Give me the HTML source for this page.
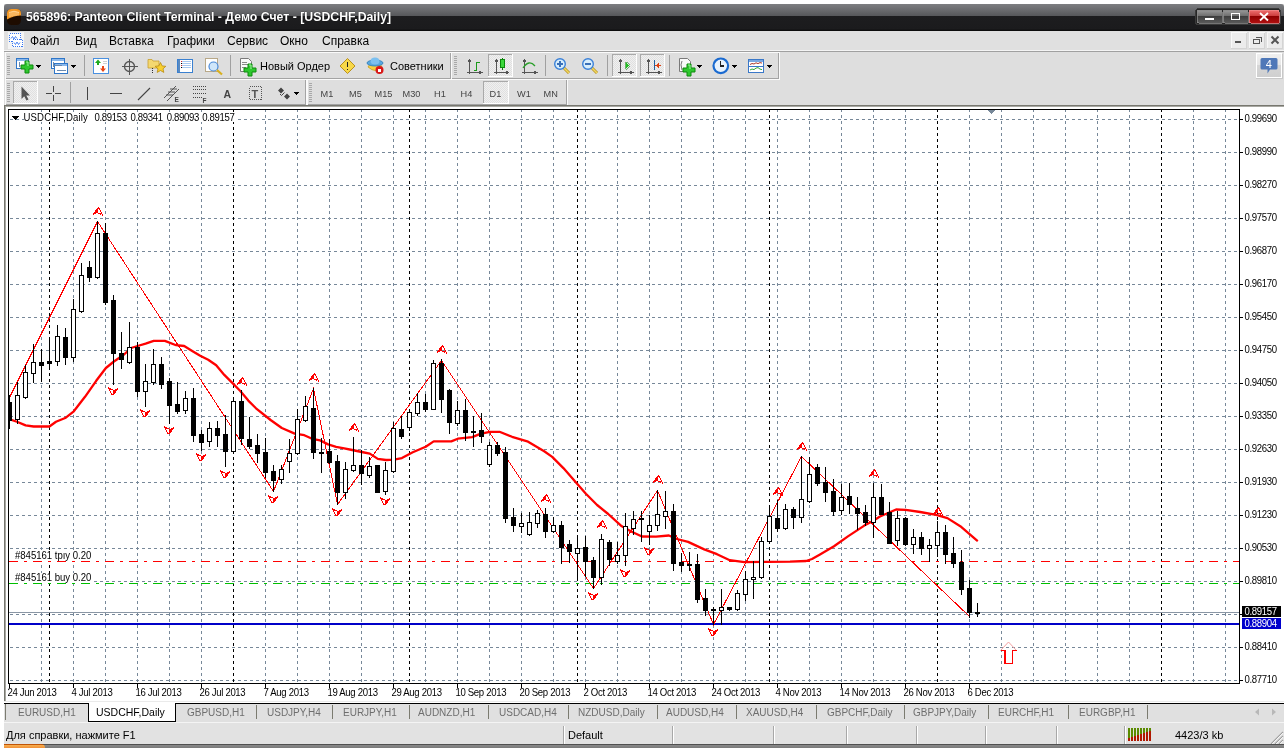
<!DOCTYPE html>
<html><head><meta charset="utf-8">
<style>
*{margin:0;padding:0;box-sizing:border-box}
html,body{width:1288px;height:748px;overflow:hidden;background:#fff;font-family:"Liberation Sans",sans-serif;position:relative}
.a{position:absolute}
#frame{left:4px;top:4px;width:1280px;height:740px;background:#e0e0e0}
#title{left:4px;top:4px;width:1280px;height:27px;border-radius:3px 3px 0 0;background:linear-gradient(#7d7e81 0px,#6a6b6e 6px,#56575a 12px,#1d1d1f 12px,#1b1b1d 25px,#070707 27px)}
#title .t{left:22px;top:6px;color:#fff;font-weight:bold;font-size:12.3px;white-space:nowrap;text-shadow:0 0 1px #000}
#menu{left:4px;top:31px;width:1280px;height:20px;background:#e0e0e0}
#menu span{position:absolute;top:3px;font-size:12px;color:#000}
#tb{left:4px;top:51px;width:1280px;height:55px;background:#dedede}
#chartbg{left:4px;top:105px;width:1280px;height:596px;background:#fff;border-left:1px solid #77776f;border-top:1px solid #77776f;box-shadow:inset 1px 1px 0 #a8a8a2}
#tabs{left:4px;top:701px;width:1280px;height:21px;background:linear-gradient(#eaeaea 0,#eaeaea 1px,#fff 1px,#fff 2px,#e0e0e0 2px)}
#tabs span{position:absolute;top:6px;font-size:10px;color:#6f6f66;white-space:nowrap}
#tabs i{position:absolute;top:4px;width:1px;height:14px;background:#7b7b70}
#status{left:4px;top:722px;width:1280px;height:22px;background:#e2e2e2;border-top:1px solid #f4f4f4}
#status span{position:absolute;top:6px;font-size:11px;color:#000;white-space:nowrap}
#status i{position:absolute;top:3px;width:1px;height:18px;background:#a8a8a8;border-right:1px solid #fff;box-sizing:content-box}
#menu span,#tabs span,#status span,#title .t,svg text{filter:grayscale(1)}
#task{left:4px;top:744px;width:1280px;height:4px;background:linear-gradient(#505050 0,#505050 1px,#8a8a8a 1px,#7a7a7a 4px)}
#taskst{left:4px;top:744px;width:41px;height:4px;background:linear-gradient(#c05408 0,#c05408 1px,#f8b050 1px,#f09038 4px);border-radius:0 4px 0 0}
</style></head><body>
<div id="frame" class="a"></div>
<div id="title" class="a"><div class="a t">565896: Panteon Client Terminal - Демо Счет - [USDCHF,Daily]</div></div>
<div id="menu" class="a">
<span style="left:26px">Файл</span><span style="left:71px">Вид</span><span style="left:105px">Вставка</span><span style="left:163px">Графики</span><span style="left:223px">Сервис</span><span style="left:276px">Окно</span><span style="left:318px">Справка</span>
</div>
<div id="tb" class="a"></div>
<svg width="1288" height="110" style="position:absolute;left:0;top:0" shape-rendering="crispEdges"><defs><pattern id="chk" width="2" height="2" patternUnits="userSpaceOnUse"><rect width="2" height="2" fill="#f0f0f0"/><rect width="1" height="1" fill="#e0e0e0"/><rect x="1" y="1" width="1" height="1" fill="#e0e0e0"/></pattern><linearGradient id="gmin" x1="0" y1="0" x2="0" y2="1"><stop offset="0" stop-color="#9a9a9a"/><stop offset="0.5" stop-color="#6a6a6a"/><stop offset="0.5" stop-color="#3e3e3e"/><stop offset="1" stop-color="#5a5a5a"/></linearGradient><linearGradient id="gcls" x1="0" y1="0" x2="0" y2="1"><stop offset="0" stop-color="#f07070"/><stop offset="0.5" stop-color="#c83838"/><stop offset="0.5" stop-color="#8e0000"/><stop offset="1" stop-color="#b01010"/></linearGradient><linearGradient id="gico" x1="0" y1="0" x2="0" y2="1"><stop offset="0" stop-color="#ffb84a"/><stop offset="0.55" stop-color="#f08a10"/><stop offset="0.56" stop-color="#2a1200"/><stop offset="1" stop-color="#1a0a00"/></linearGradient><linearGradient id="gnot" x1="0" y1="0" x2="0" y2="1"><stop offset="0" stop-color="#f0f0f0"/><stop offset="0.5" stop-color="#e6e6e6"/><stop offset="0.5" stop-color="#d6d6d6"/><stop offset="1" stop-color="#cfcfcf"/></linearGradient></defs><rect x="7" y="9" width="14" height="16" rx="4.5" fill="#1e0c00" shape-rendering="geometricPrecision"/><path d="M7,18 V13.5 Q7,9 11.5,9 H16.5 Q21,9 21,13.5 V15.5 Q14,15.5 7,19.5z" fill="#f59a28" shape-rendering="geometricPrecision"/><path d="M9,12.5 Q14,10 19,12.5 M10,12.5V17 M12,11.8V16.5 M14,11.5V16 M16,11.8V15.8 M18,12.5V15.5" stroke="#ffd8a0" stroke-width="0.9" fill="none" shape-rendering="geometricPrecision"/><rect x="1195.5" y="8.5" width="85" height="16" rx="3" fill="#262626" stroke="#3a3a3a"/><rect x="1197" y="10" width="25" height="13" rx="1.5" fill="url(#gmin)" stroke="#8a8a8a" stroke-width="0.8"/><rect x="1223" y="10" width="25" height="13" rx="1.5" fill="url(#gmin)" stroke="#8a8a8a" stroke-width="0.8"/><rect x="1249" y="10" width="30" height="13" rx="1.5" fill="url(#gcls)" stroke="#e88" stroke-width="0.8"/><rect x="1205" y="18" width="9" height="2.2" fill="#fff"/><rect x="1231.5" y="13.5" width="8" height="6" fill="none" stroke="#fff" stroke-width="1.4"/><path d="M1260,13L1268,20.5M1268,13L1260,20.5" stroke="#fff" stroke-width="1.8" shape-rendering="geometricPrecision"/><rect x="8" y="32" width="16" height="17" fill="#f4f4f4"/><rect x="9.5" y="33.5" width="11" height="8" fill="#fff" stroke="#3a78f0" stroke-dasharray="1 1"/><path d="M11,38.5l1.5,-2l1.5,2.5l1.5,-2.5l1.5,2" stroke="#3a78f0" fill="none" stroke-width="0.9" shape-rendering="geometricPrecision"/><rect x="12.5" y="39.5" width="10" height="7" fill="#fff" stroke="#3a78f0" stroke-dasharray="1 1"/><path d="M14,42.5l1.5,2l1.5,-2.5l1.5,2.5l1.5,-2" stroke="#3a78f0" fill="none" stroke-width="0.9" shape-rendering="geometricPrecision"/><rect x="1231.5" y="32.5" width="15" height="15.5" fill="#ececec" stroke="#f8f8f8"/><path d="M1246.5,33V48.5H1231" stroke="#d4d4d4" fill="none"/><rect x="1249.5" y="32.5" width="15" height="15.5" fill="#ececec" stroke="#f8f8f8"/><path d="M1264.5,33V48.5H1249" stroke="#d4d4d4" fill="none"/><rect x="1267.5" y="32.5" width="15" height="15.5" fill="#ececec" stroke="#f8f8f8"/><path d="M1282.5,33V48.5H1267" stroke="#d4d4d4" fill="none"/><rect x="1235" y="41" width="6" height="2" fill="#555"/><path d="M1253.5,39.5h6v4h-6z M1255.5,37.5h6v4" stroke="#555" stroke-width="1.2" fill="none"/><path d="M1271.5,36.5L1278.5,43.5M1278.5,36.5L1271.5,43.5" stroke="#555" stroke-width="2" shape-rendering="geometricPrecision"/><path d="M4,51.5H1284" stroke="#a0a0a0"/><path d="M4,50.5H1284" stroke="#f4f4f4"/><path d="M5.5,79V52.5H451" stroke="#fafafa" fill="none"/><path d="M450.5,53V78.5H6" stroke="#a4a4a4" fill="none"/><path d="M451.5,52V79.5H5" stroke="#fafafa" fill="none"/><path d="M451.5,79V52.5H779" stroke="#fafafa" fill="none"/><path d="M778.5,53V78.5H452" stroke="#a4a4a4" fill="none"/><path d="M779.5,52V79.5H451" stroke="#fafafa" fill="none"/><path d="M5.5,105V79.5H306" stroke="#fafafa" fill="none"/><path d="M305.5,80V104.5H6" stroke="#a4a4a4" fill="none"/><path d="M306.5,79V105.5H5" stroke="#fafafa" fill="none"/><path d="M307.5,105V79.5H567" stroke="#fafafa" fill="none"/><path d="M566.5,80V104.5H308" stroke="#a4a4a4" fill="none"/><path d="M567.5,79V105.5H307" stroke="#fafafa" fill="none"/><path d="M7,56.5h3M7,58.5h3M7,60.5h3M7,62.5h3M7,64.5h3M7,66.5h3M7,68.5h3M7,70.5h3M7,72.5h3M7,74.5h3" stroke="#a8a8a8" fill="none"/><path d="M7,83.5h3M7,85.5h3M7,87.5h3M7,89.5h3M7,91.5h3M7,93.5h3M7,95.5h3M7,97.5h3M7,99.5h3M7,101.5h3" stroke="#a8a8a8" fill="none"/><path d="M454,56.5h3M454,58.5h3M454,60.5h3M454,62.5h3M454,64.5h3M454,66.5h3M454,68.5h3M454,70.5h3M454,72.5h3M454,74.5h3" stroke="#a8a8a8" fill="none"/><path d="M309,83.5h3M309,85.5h3M309,87.5h3M309,89.5h3M309,91.5h3M309,93.5h3M309,95.5h3M309,97.5h3M309,99.5h3M309,101.5h3" stroke="#a8a8a8" fill="none"/><path d="M84.5,55V76" stroke="#a0a0a0"/><path d="M230.5,55V76" stroke="#a0a0a0"/><path d="M545.5,55V76" stroke="#a0a0a0"/><path d="M607.5,55V76" stroke="#a0a0a0"/><path d="M669.5,55V76" stroke="#a0a0a0"/><path d="M70.5,82V103" stroke="#a0a0a0"/><rect x="16.5" y="58.5" width="12" height="10" fill="#fff" stroke="#2f76c8"/><rect x="17" y="59" width="11" height="2" fill="#8ab8ec"/><path d="M19.5,62V67" stroke="#6a8ab0"/><path d="M25,61h4v4h4v4h-4v4h-4v-4h-4v-4h4z" fill="#2ec72e" stroke="#0c8a0c" stroke-width="1" shape-rendering="geometricPrecision"/><path d="M26,62h2v4" stroke="#9ef59e" stroke-width="1" fill="none" shape-rendering="geometricPrecision"/><path d="M36,65h5l-2.5,3z" fill="#000"/><rect x="51.5" y="58.5" width="13" height="10" fill="#fff" stroke="#2f76c8"/><rect x="52" y="59" width="12" height="2" fill="#8ab8ec"/><rect x="54.5" y="63.5" width="13" height="10" fill="#fff" stroke="#2f76c8"/><rect x="55" y="64" width="12" height="2" fill="#8ab8ec"/><path d="M53.5,61.5V66.5 M53,65.5H62 M57,70.5H66" stroke="#6a8ab0"/><path d="M71,65h5l-2.5,3z" fill="#000"/><rect x="93.5" y="58.5" width="15" height="15" rx="1" fill="#fff" stroke="#4a90e0" stroke-width="1.2"/><path d="M97,65h2v-2h2l-3,-3.5l-3,3.5h2z" fill="#1faa1f" shape-rendering="geometricPrecision"/><path d="M102,66h2v2.5h2l-3,3.5l-3,-3.5h2z" fill="#e84818" shape-rendering="geometricPrecision"/><path d="M103,61h4 M103,63h4" stroke="#d0d0d0"/><circle cx="129.5" cy="66.5" r="5" fill="none" stroke="#555" stroke-width="1.3" shape-rendering="geometricPrecision"/><path d="M129.5,58.5V74.5 M121.5,66.5H137.5" stroke="#555" stroke-width="1.2"/><path d="M148,59.5h4l1,1.5h6v7h-11z" fill="#f4d870" stroke="#c8a030" stroke-width="0.8" shape-rendering="geometricPrecision"/><path d="M160.5,62.5l1.6,3.4l3.7,0.4l-2.8,2.5l0.8,3.6l-3.3,-1.9l-3.3,1.9l0.8,-3.6l-2.8,-2.5l3.7,-0.4z" fill="#f8d030" stroke="#b88a10" stroke-width="0.8" shape-rendering="geometricPrecision"/><path d="M152.5,68V74" stroke="#333" stroke-dasharray="1 1"/><rect x="177.5" y="59.5" width="15" height="13" rx="1" fill="#fff" stroke="#3a80d0" stroke-width="1.2"/><rect x="178" y="60" width="2" height="12" fill="#5a8ac0"/><path d="M182,61.5h9 M182,63.5h9 M182,65.5h9 M182,67.5h9" stroke="#a8c8f0"/><path d="M181,61.5h1 M181,65.5h1" stroke="#e02020"/><path d="M181,63.5h1 M181,67.5h1" stroke="#000"/><rect x="205.5" y="58.5" width="12" height="13" fill="#fff" stroke="#b8a888"/><circle cx="213.5" cy="66.5" r="4.5" fill="#cfe6fa" stroke="#4a8ad8" stroke-width="1.2" shape-rendering="geometricPrecision"/><path d="M217,70L222,74.5" stroke="#d8b020" stroke-width="2.2" shape-rendering="geometricPrecision"/><path d="M240.5,58.5h8l3,3v10h-11z" fill="#fafafa" stroke="#7a7a7a" shape-rendering="geometricPrecision"/><path d="M242,62h5 M242,64.5h6 M242,67h4" stroke="#8a8a8a"/><path d="M248,64h4v4h4v4h-4v4h-4v-4h-4v-4h4z" fill="#2ec72e" stroke="#0c8a0c" stroke-width="1" shape-rendering="geometricPrecision"/><path d="M249,65h2v4" stroke="#9ef59e" stroke-width="1" fill="none" shape-rendering="geometricPrecision"/><text x="260" y="70" font-family='"Liberation Sans", sans-serif' font-size="11" fill="#000">Новый Ордер</text><path d="M347.5,58.5l7.5,7.5l-7.5,7.5l-7.5,-7.5z" fill="#f8d848" stroke="#b89020" stroke-width="1" shape-rendering="geometricPrecision"/><path d="M347.5,61.5V67" stroke="#222" stroke-width="1.6"/><rect x="346.7" y="68.5" width="1.6" height="1.6" fill="#222"/><path d="M368,67 q8,7 14,0 l-2,-3 h-10z" fill="#f8d040" stroke="#c8a020" stroke-width="0.8" shape-rendering="geometricPrecision"/><ellipse cx="375" cy="63" rx="8" ry="3" fill="#58a8e0" stroke="#2a78b8" stroke-width="0.8" shape-rendering="geometricPrecision"/><ellipse cx="375" cy="61" rx="4.5" ry="3.5" fill="#7cc0f0" shape-rendering="geometricPrecision"/><circle cx="379.5" cy="70" r="4" fill="#d81818" shape-rendering="geometricPrecision"/><rect x="378" y="68.5" width="3" height="3" fill="#fff"/><text x="390" y="70" font-family='"Liberation Sans", sans-serif' font-size="11" fill="#000">Советники</text><rect x="488" y="54" width="25" height="23" fill="url(#chk)"/><path d="M488.5,77V54.5H513" stroke="#a9a9a9" fill="none"/><path d="M488,76.5H512.5V54" stroke="#fff" fill="none"/><path d="M469.5,59V74 M467,72.5H482" stroke="#555" stroke-width="1.2" fill="none"/><path d="M467.5,62L469.5,58.5L471.5,62z M479,70.5L482.5,72.5L479,74.5z" fill="#555"/><path d="M474,70.5h2.5V62.5h3" stroke="#1a9a1a" stroke-width="1.4" fill="none"/><path d="M496.5,59V74 M494,72.5H509" stroke="#555" stroke-width="1.2" fill="none"/><path d="M494.5,62L496.5,58.5L498.5,62z M506,70.5L509.5,72.5L506,74.5z" fill="#555"/><path d="M502.5,57.5V70" stroke="#0c7a0c"/><rect x="500.5" y="59.5" width="4" height="8" fill="#3cd83c" stroke="#0c8a0c"/><path d="M524.5,59V74 M522,72.5H537" stroke="#555" stroke-width="1.2" fill="none"/><path d="M522.5,62L524.5,58.5L526.5,62z M534,70.5L537.5,72.5L534,74.5z" fill="#555"/><path d="M523,68 Q529,59 535,66" stroke="#2aa02a" stroke-width="1.3" fill="none" shape-rendering="geometricPrecision"/><path d="M563.5,67.5L569,73" stroke="#b89020" stroke-width="3" shape-rendering="geometricPrecision"/><path d="M563.5,67.5L569,73" stroke="#f0d860" stroke-width="1.6" shape-rendering="geometricPrecision"/><circle cx="560" cy="64" r="5.3" fill="#d8eefc" stroke="#3a80d8" stroke-width="1.4" shape-rendering="geometricPrecision"/><path d="M557,64H563" stroke="#3a70b8" stroke-width="1.6"/><path d="M560,61V67" stroke="#3a70b8" stroke-width="1.6"/><path d="M591.5,67.5L597,73" stroke="#b89020" stroke-width="3" shape-rendering="geometricPrecision"/><path d="M591.5,67.5L597,73" stroke="#f0d860" stroke-width="1.6" shape-rendering="geometricPrecision"/><circle cx="588" cy="64" r="5.3" fill="#d8eefc" stroke="#3a80d8" stroke-width="1.4" shape-rendering="geometricPrecision"/><path d="M585,64H591" stroke="#3a70b8" stroke-width="1.6"/><rect x="612" y="54" width="25" height="23" fill="url(#chk)"/><path d="M612.5,77V54.5H637" stroke="#a9a9a9" fill="none"/><path d="M612,76.5H636.5V54" stroke="#fff" fill="none"/><path d="M620.5,59V74 M618,72.5H633" stroke="#555" stroke-width="1.2" fill="none"/><path d="M618.5,62L620.5,58.5L622.5,62z M630,70.5L633.5,72.5L630,74.5z" fill="#555"/><path d="M625.5,62v7l4,-3.5z" fill="#20c020" stroke="#109010" stroke-width="0.6"/><rect x="640" y="54" width="25" height="23" fill="url(#chk)"/><path d="M640.5,77V54.5H665" stroke="#a9a9a9" fill="none"/><path d="M640,76.5H664.5V54" stroke="#fff" fill="none"/><path d="M648.5,59V74 M646,72.5H661" stroke="#555" stroke-width="1.2" fill="none"/><path d="M646.5,62L648.5,58.5L650.5,62z M658,70.5L661.5,72.5L658,74.5z" fill="#555"/><path d="M654.5,60V70" stroke="#2060a0" stroke-width="1.3"/><path d="M655.5,65.5l3,-2.5v1.8h2v1.4h-2v1.8z" fill="#e04010"/><path d="M679.5,58.5h8l3,3v10h-11z" fill="#fafafa" stroke="#7a7a7a" shape-rendering="geometricPrecision"/><path d="M682,61 q-2,3 0,9" stroke="#555" fill="none" stroke-width="0.8" shape-rendering="geometricPrecision"/><path d="M687,64h4v4h4v4h-4v4h-4v-4h-4v-4h4z" fill="#2ec72e" stroke="#0c8a0c" stroke-width="1" shape-rendering="geometricPrecision"/><path d="M688,65h2v4" stroke="#9ef59e" stroke-width="1" fill="none" shape-rendering="geometricPrecision"/><path d="M697,65h5l-2.5,3z" fill="#000"/><circle cx="720.8" cy="65.8" r="7.3" fill="#e8f2fc" stroke="#1a6ad0" stroke-width="2.2" shape-rendering="geometricPrecision"/><path d="M720.5,61V66H724" stroke="#222" stroke-width="1.1" fill="none"/><path d="M732,65h5l-2.5,3z" fill="#000"/><rect x="748.5" y="59.5" width="15" height="13" fill="#fff" stroke="#3a78c8" stroke-width="1.2"/><rect x="749" y="60" width="14" height="1.5" fill="#7aa8e0"/><path d="M749,66.5h14" stroke="#3a78c8"/><path d="M750,64.5l2,-1l2,0.5l2,-1.2l2,0.8l2,-1l2,0.5" stroke="#a02010" fill="none" stroke-width="0.9" shape-rendering="geometricPrecision"/><path d="M750,70l2,-1l2,0.6l2,-1.5l2,-0.5l2,1.5l2,0.5" stroke="#20a020" fill="none" stroke-width="0.9" shape-rendering="geometricPrecision"/><path d="M767,65h5l-2.5,3z" fill="#000"/><rect x="1256.5" y="53.5" width="25" height="24" fill="url(#gnot)" stroke="#fff"/><path d="M1282,54V78H1256" stroke="#c8c8c8" fill="none"/><path d="M1262,58h14a1.5,1.5 0 0 1 1.5,1.5v8.5a1.5,1.5 0 0 1 -1.5,1.5h-6l-2.5,4v-4h-5.5a1.5,1.5 0 0 1 -1.5,-1.5v-8.5a1.5,1.5 0 0 1 1.5,-1.5z" fill="#4f78b8" shape-rendering="geometricPrecision"/><text x="1265.8" y="67.5" font-family='"Liberation Sans", sans-serif' font-size="11" fill="#fff">4</text><rect x="13" y="81" width="25" height="23" fill="url(#chk)"/><path d="M13.5,104V81.5H38" stroke="#a9a9a9" fill="none"/><path d="M13,103.5H37.5V81" stroke="#fff" fill="none"/><path d="M21.5,86.5V99l2.7,-2.8l2.3,4.3l2,-1l-2.2,-4h3.7z" fill="#555" shape-rendering="geometricPrecision"/><path d="M53.5,86V92 M53.5,95V101 M46,93.5H52 M55,93.5H61" stroke="#444" stroke-width="1.1"/><path d="M87.5,87V100" stroke="#444" stroke-width="1.1"/><path d="M110,93.5H122" stroke="#444" stroke-width="1.1"/><path d="M138,100L150,88" stroke="#444" stroke-width="1.1" shape-rendering="geometricPrecision"/><path d="M164,98L176,86 M167,101L179,89 M166,95h7 M168,92h7 M170,89h7" stroke="#555" stroke-width="1" fill="none" shape-rendering="geometricPrecision"/><text x="174.5" y="102" font-family='"Liberation Sans", sans-serif' font-size="6.5" font-weight="bold" fill="#444">E</text><path d="M193,86.5h14 M193,89.5h14 M193,93.5h14 M193,97.5h10" stroke="#444" stroke-dasharray="1 1"/><text x="202.5" y="102.5" font-family='"Liberation Sans", sans-serif' font-size="6.5" font-weight="bold" fill="#444">F</text><text x="223.5" y="97.5" font-family='"Liberation Sans", sans-serif' font-size="10.5" font-weight="bold" fill="#444">A</text><rect x="249.5" y="86.5" width="12" height="13" fill="none" stroke="#555" stroke-dasharray="1 1"/><text x="251.5" y="98" font-family='"Liberation Sans", sans-serif' font-size="11" font-weight="bold" fill="#555">T</text><path d="M278,90.5l3,-3l3,3l-3,3z M284,96.5l3,-3l3,3l-3,3z" fill="#444" shape-rendering="geometricPrecision"/><path d="M280,94l1.5,1.5l3,-3" stroke="#444" fill="none" stroke-width="1" shape-rendering="geometricPrecision"/><path d="M294,92h5l-2.5,3z" fill="#000"/><rect x="483" y="81" width="26" height="23" fill="url(#chk)"/><path d="M483.5,104V81.5H509" stroke="#a9a9a9" fill="none"/><path d="M483,103.5H508.5V81" stroke="#fff" fill="none"/><text x="320.5" y="96.7" font-family='"Liberation Sans", sans-serif' font-size="9.2" fill="#444">M1</text><text x="349" y="96.7" font-family='"Liberation Sans", sans-serif' font-size="9.2" fill="#444">M5</text><text x="374.5" y="96.7" font-family='"Liberation Sans", sans-serif' font-size="9.2" fill="#444">M15</text><text x="402.5" y="96.7" font-family='"Liberation Sans", sans-serif' font-size="9.2" fill="#444">M30</text><text x="434" y="96.7" font-family='"Liberation Sans", sans-serif' font-size="9.2" fill="#444">H1</text><text x="460.5" y="96.7" font-family='"Liberation Sans", sans-serif' font-size="9.2" fill="#444">H4</text><text x="489.5" y="96.7" font-family='"Liberation Sans", sans-serif' font-size="9.2" fill="#444">D1</text><text x="517" y="96.7" font-family='"Liberation Sans", sans-serif' font-size="9.2" fill="#444">W1</text><text x="543.5" y="96.7" font-family='"Liberation Sans", sans-serif' font-size="9.2" fill="#444">MN</text></svg>
<div id="chartbg" class="a"></div>
<svg width="1288" height="748" viewBox="0 0 1288 748" shape-rendering="crispEdges" style="position:absolute;left:0;top:0"><path d="M9,119.5H1239 M9,152.5H1239 M9,185.5H1239 M9,218.5H1239 M9,251.5H1239 M9,284.5H1239 M9,317.5H1239 M9,350.5H1239 M9,383.5H1239 M9,416.5H1239 M9,449.5H1239 M9,482.5H1239 M9,515.5H1239 M9,548.5H1239 M9,581.5H1239 M9,614.5H1239 M9,647.5H1239 M9,680.5H1239" stroke="#778899" stroke-width="1" stroke-dasharray="3 3" stroke-dashoffset="-1" fill="none"/><path d="M41.5,109V683 M73.5,109V683 M105.5,109V683 M137.5,109V683 M169.5,109V683 M201.5,109V683 M265.5,109V683 M297.5,109V683 M329.5,109V683 M361.5,109V683 M393.5,109V683 M425.5,109V683 M457.5,109V683 M489.5,109V683 M521.5,109V683 M553.5,109V683 M585.5,109V683 M617.5,109V683 M649.5,109V683 M681.5,109V683 M713.5,109V683 M745.5,109V683 M777.5,109V683 M809.5,109V683 M841.5,109V683 M873.5,109V683 M905.5,109V683 M969.5,109V683 M1001.5,109V683 M1033.5,109V683 M1065.5,109V683 M1097.5,109V683 M1129.5,109V683 M1193.5,109V683 M1225.5,109V683" stroke="#778899" stroke-width="1" stroke-dasharray="3 3" fill="none"/><path d="M49.5,109V683 M233.5,109V683 M409.5,109V683 M577.5,109V683 M769.5,109V683 M937.5,109V683 M1161.5,109V683" stroke="#000" stroke-width="1" stroke-dasharray="3 3" fill="none"/><path d="M9,561.5H1239" stroke="#ff0000" stroke-width="1" stroke-dasharray="9 6 3 6" fill="none"/><path d="M9,583.5H1239" stroke="#00c000" stroke-width="1" stroke-dasharray="9 6 3 6" fill="none"/><path d="M9,612.5H1239" stroke="#8a96a4" stroke-width="1" fill="none"/><path d="M9,624H1239" stroke="#0000c8" stroke-width="2" fill="none"/><defs><clipPath id="cc"><rect x="9" y="110" width="1230" height="573"/></clipPath></defs><g clip-path="url(#cc)"><polyline points="9.0,419.0 17.6,422.0 25.6,425.4 33.7,426.5 49.4,426.5 56.0,421.7 65.8,417.7 73.8,411.3 85.0,396.8 96.2,380.8 105.9,368.0 113.9,361.5 123.5,355.0 131.0,348.0 137.6,346.0 145.6,343.6 153.7,340.9 164.9,340.9 176.1,345.2 184.2,346.0 192.2,350.9 200.2,355.7 208.2,359.7 216.2,365.3 224.3,374.9 232.3,382.9 240.3,391.0 248.3,400.6 256.0,408.3 270.6,420.0 281.8,428.0 294.7,433.6 304.3,435.2 312.1,438.8 320.1,440.4 328.1,444.4 336.1,446.8 344.2,448.4 352.2,450.0 361.8,452.0 369.8,453.6 377.8,458.9 385.9,460.0 393.9,459.7 401.9,458.1 412.8,452.3 425.7,446.7 433.7,441.4 451.3,441.4 457.8,438.7 472.2,437.1 480.2,433.9 489.8,431.8 499.5,431.8 512.1,436.8 528.1,441.7 544.2,451.3 552.2,456.9 563.4,468.1 574.7,481.0 585.9,493.8 597.1,505.0 608.2,514.0 621.0,525.7 630.7,531.3 641.9,536.5 656.0,536.6 668.9,535.5 676.9,539.0 688.1,541.9 704.2,549.4 717.0,554.2 729.8,560.2 744.3,562.2 768.0,561.8 790.0,561.6 806.0,561.0 812.0,559.0 820.0,554.5 834.0,546.3 848.3,536.1 864.3,525.6 872.0,521.5 880.0,516.5 896.1,509.5 905.7,509.8 920.2,512.0 936.2,514.9 947.4,518.1 960.3,526.2 977.1,540.6" stroke="#ff0000" stroke-width="2.3" fill="none" stroke-linejoin="round" stroke-linecap="round" shape-rendering="geometricPrecision"/><polyline points="9.5,397.5 97.5,221.5 273.5,491.5 313.5,388.5 337.5,504.5 441.5,360.5 593.5,588.5 657.5,490.5 713.5,624.5 801.5,456.5 969.5,616.5" stroke="#ff0000" stroke-width="1" fill="none"/><path d="M9.5,395V429 M17.5,382V424 M25.5,365V399 M33.5,344V383 M41.5,349V382 M49.5,337V370 M57.5,325V366 M65.5,328V365 M73.5,299V362 M81.5,263V313 M89.5,261V282 M97.5,221V279 M105.5,223V305 M113.5,295V385 M121.5,332V369 M129.5,322V364 M137.5,342V397 M145.5,364V407 M153.5,349V385 M161.5,357V389 M169.5,378V424 M177.5,382V414 M185.5,391V414 M193.5,388V442 M201.5,430V451 M209.5,422V447 M217.5,421V447 M225.5,415V467 M233.5,397V453 M241.5,390V445 M249.5,417V449 M257.5,434V463 M265.5,438V478 M273.5,465V492 M281.5,465V484 M289.5,439V473 M297.5,409V455 M305.5,396V422 M313.5,388V459 M321.5,438V473 M329.5,439V464 M337.5,455V505 M345.5,462V499 M353.5,437V472 M361.5,450V485 M369.5,457V478 M377.5,465V493 M385.5,462V495 M393.5,422V473 M401.5,416V439 M409.5,409V431 M417.5,393V416 M425.5,394V412 M433.5,360V410 M441.5,359V413 M449.5,389V434 M457.5,401V426 M465.5,399V441 M473.5,416V447 M481.5,413V443 M489.5,442V467 M497.5,442V456 M505.5,447V523 M513.5,508V532 M521.5,513V533 M529.5,512V536 M537.5,510V528 M545.5,508V538 M553.5,517V533 M561.5,521V564 M569.5,540V563 M577.5,535V581 M585.5,536V577 M593.5,557V589 M601.5,534V585 M609.5,540V566 M617.5,542V564 M625.5,513V566 M633.5,511V535 M641.5,511V542 M649.5,515V545 M657.5,490V531 M665.5,491V529 M673.5,504V571 M681.5,553V572 M689.5,552V571 M697.5,554V603 M705.5,589V616 M713.5,607V625 M721.5,589V625 M729.5,607V611 M737.5,590V611 M745.5,571V601 M753.5,561V599 M761.5,537V579 M769.5,505V544 M777.5,500V532 M785.5,504V530 M793.5,507V529 M801.5,456V523 M809.5,457V503 M817.5,464V486 M825.5,467V502 M833.5,479V516 M841.5,484V515 M849.5,483V514 M857.5,497V530 M865.5,505V526 M873.5,483V538 M881.5,484V515 M889.5,502V544 M897.5,511V546 M905.5,517V546 M913.5,529V554 M921.5,532V555 M929.5,539V562 M937.5,521V557 M945.5,525V564 M953.5,537V568 M961.5,550V595 M969.5,580V618 M977.5,603V617" stroke="#000" stroke-width="1" fill="none"/><path d="M7,402h5v19h-5z M39,362h5v4h-5z M47,361h5v3h-5z M63,337h5v21h-5z M87,267h5v11h-5z M103,233h5v70h-5z M111,300h5v54h-5z M119,353h5v7h-5z M135,347h5v45h-5z M159,364h5v21h-5z M167,381h5v25h-5z M175,404h5v8h-5z M191,398h5v38h-5z M199,434h5v9h-5z M215,428h5v8h-5z M223,434h5v18h-5z M239,401h5v38h-5z M247,439h5v8h-5z M255,445h5v9h-5z M263,452h5v21h-5z M271,471h5v10h-5z M311,408h5v45h-5z M319,452h5v2h-5z M327,451h5v12h-5z M335,461h5v32h-5z M359,465h5v9h-5z M375,465h5v28h-5z M399,429h5v8h-5z M423,402h5v8h-5z M439,363h5v37h-5z M447,390h5v33h-5z M463,410h5v23h-5z M471,431h5v2h-5z M479,430h5v7h-5z M495,445h5v9h-5z M503,452h5v67h-5z M511,517h5v9h-5z M543,514h5v18h-5z M559,525h5v23h-5z M567,544h5v8h-5z M583,547h5v15h-5z M591,560h5v18h-5z M607,542h5v18h-5z M639,518h5v2h-5z M671,511h5v53h-5z M679,562h5v4h-5z M687,564h5v2h-5z M695,564h5v36h-5z M703,598h5v13h-5z M711,609h5v2h-5z M727,607h5v3h-5z M775,518h5v11h-5z M791,509h5v9h-5z M815,467h5v17h-5z M823,482h5v11h-5z M831,491h5v21h-5z M847,496h5v9h-5z M855,508h5v6h-5z M863,512h5v11h-5z M879,497h5v18h-5z M887,512h5v32h-5z M903,518h5v27h-5z M919,537h5v12h-5z M943,532h5v23h-5z M951,553h5v11h-5z M959,562h5v28h-5z M967,588h5v25h-5z M975,612h5v2h-5z" fill="#000"/><path d="M15.5,395.5h4v24h-4z M23.5,372.5h4v25h-4z M31.5,362.5h4v11h-4z M55.5,336.5h4v25h-4z M71.5,309.5h4v48h-4z M79.5,275.5h4v36h-4z M95.5,233.5h4v44h-4z M127.5,347.5h4v15h-4z M143.5,381.5h4v10h-4z M151.5,364.5h4v18h-4z M183.5,398.5h4v12h-4z M207.5,428.5h4v13h-4z M231.5,401.5h4v50h-4z M279.5,469.5h4v10h-4z M287.5,453.5h4v8h-4z M295.5,419.5h4v34h-4z M303.5,406.5h4v14h-4z M343.5,469.5h4v23h-4z M351.5,465.5h4v5h-4z M367.5,466.5h4v9h-4z M383.5,470.5h4v21h-4z M391.5,428.5h4v43h-4z M407.5,412.5h4v15h-4z M415.5,402.5h4v11h-4z M431.5,363.5h4v46h-4z M455.5,410.5h4v13h-4z M487.5,445.5h4v19h-4z M519.5,523.5h4v3h-4z M527.5,522.5h4v12h-4z M535.5,513.5h4v10h-4z M551.5,525.5h4v6h-4z M575.5,548.5h4v5h-4z M599.5,539.5h4v38h-4z M615.5,555.5h4v6h-4z M623.5,526.5h4v29h-4z M631.5,519.5h4v9h-4z M647.5,525.5h4v6h-4z M655.5,514.5h4v11h-4z M663.5,511.5h4v5h-4z M719.5,607.5h4v3h-4z M735.5,593.5h4v16h-4z M743.5,579.5h4v15h-4z M751.5,577.5h4v2h-4z M759.5,541.5h4v36h-4z M767.5,516.5h4v25h-4z M783.5,509.5h4v19h-4z M799.5,499.5h4v18h-4z M807.5,474.5h4v27h-4z M839.5,497.5h4v13h-4z M871.5,497.5h4v25h-4z M895.5,518.5h4v22h-4z M911.5,537.5h4v7h-4z M927.5,545.5h4v3h-4z M935.5,532.5h4v13h-4z" fill="#fff" stroke="#000" stroke-width="1"/><path d="M98,207 L91.5,216 L98,212.5Z" fill="#f00"/><path d="M98.5,207.5 L103,216 M98.5,213 L101.5,214.5" fill="none" stroke="#f00" stroke-width="1"/><path d="M242,377 L235.5,386 L242,382.5Z" fill="#f00"/><path d="M242.5,377.5 L247,386 M242.5,383 L245.5,384.5" fill="none" stroke="#f00" stroke-width="1"/><path d="M314,373 L307.5,382 L314,378.5Z" fill="#f00"/><path d="M314.5,373.5 L319,382 M314.5,379 L317.5,380.5" fill="none" stroke="#f00" stroke-width="1"/><path d="M354,423 L347.5,432 L354,428.5Z" fill="#f00"/><path d="M354.5,423.5 L359,432 M354.5,429 L357.5,430.5" fill="none" stroke="#f00" stroke-width="1"/><path d="M442,345 L435.5,354 L442,350.5Z" fill="#f00"/><path d="M442.5,345.5 L447,354 M442.5,351 L445.5,352.5" fill="none" stroke="#f00" stroke-width="1"/><path d="M546,494 L539.5,503 L546,499.5Z" fill="#f00"/><path d="M546.5,494.5 L551,503 M546.5,500 L549.5,501.5" fill="none" stroke="#f00" stroke-width="1"/><path d="M602,520 L595.5,529 L602,525.5Z" fill="#f00"/><path d="M602.5,520.5 L607,529 M602.5,526 L605.5,527.5" fill="none" stroke="#f00" stroke-width="1"/><path d="M658,475 L651.5,484 L658,480.5Z" fill="#f00"/><path d="M658.5,475.5 L663,484 M658.5,481 L661.5,482.5" fill="none" stroke="#f00" stroke-width="1"/><path d="M778,487 L771.5,496 L778,492.5Z" fill="#f00"/><path d="M778.5,487.5 L783,496 M778.5,493 L781.5,494.5" fill="none" stroke="#f00" stroke-width="1"/><path d="M802,442 L795.5,451 L802,447.5Z" fill="#f00"/><path d="M802.5,442.5 L807,451 M802.5,448 L805.5,449.5" fill="none" stroke="#f00" stroke-width="1"/><path d="M874,469 L867.5,478 L874,474.5Z" fill="#f00"/><path d="M874.5,469.5 L879,478 M874.5,475 L877.5,476.5" fill="none" stroke="#f00" stroke-width="1"/><path d="M938,507 L931.5,516 L938,512.5Z" fill="#f00"/><path d="M938.5,507.5 L943,516 M938.5,513 L941.5,514.5" fill="none" stroke="#f00" stroke-width="1"/><path d="M113,396 L119.5,387 L113,390.5Z" fill="#f00"/><path d="M112.5,395.5 L108,387 M112.5,390 L109.5,388.5" fill="none" stroke="#f00" stroke-width="1"/><path d="M145,418 L151.5,409 L145,412.5Z" fill="#f00"/><path d="M144.5,417.5 L140,409 M144.5,412 L141.5,410.5" fill="none" stroke="#f00" stroke-width="1"/><path d="M169,435 L175.5,426 L169,429.5Z" fill="#f00"/><path d="M168.5,434.5 L164,426 M168.5,429 L165.5,427.5" fill="none" stroke="#f00" stroke-width="1"/><path d="M201,462 L207.5,453 L201,456.5Z" fill="#f00"/><path d="M200.5,461.5 L196,453 M200.5,456 L197.5,454.5" fill="none" stroke="#f00" stroke-width="1"/><path d="M225,479 L231.5,470 L225,473.5Z" fill="#f00"/><path d="M224.5,478.5 L220,470 M224.5,473 L221.5,471.5" fill="none" stroke="#f00" stroke-width="1"/><path d="M273,504 L279.5,495 L273,498.5Z" fill="#f00"/><path d="M272.5,503.5 L268,495 M272.5,498 L269.5,496.5" fill="none" stroke="#f00" stroke-width="1"/><path d="M337,517 L343.5,508 L337,511.5Z" fill="#f00"/><path d="M336.5,516.5 L332,508 M336.5,511 L333.5,509.5" fill="none" stroke="#f00" stroke-width="1"/><path d="M385,506 L391.5,497 L385,500.5Z" fill="#f00"/><path d="M384.5,505.5 L380,497 M384.5,500 L381.5,498.5" fill="none" stroke="#f00" stroke-width="1"/><path d="M593,601 L599.5,592 L593,595.5Z" fill="#f00"/><path d="M592.5,600.5 L588,592 M592.5,595 L589.5,593.5" fill="none" stroke="#f00" stroke-width="1"/><path d="M625,578 L631.5,569 L625,572.5Z" fill="#f00"/><path d="M624.5,577.5 L620,569 M624.5,572 L621.5,570.5" fill="none" stroke="#f00" stroke-width="1"/><path d="M649,556 L655.5,547 L649,550.5Z" fill="#f00"/><path d="M648.5,555.5 L644,547 M648.5,550 L645.5,548.5" fill="none" stroke="#f00" stroke-width="1"/><path d="M713,637 L719.5,628 L713,631.5Z" fill="#f00"/><path d="M712.5,636.5 L708,628 M712.5,631 L709.5,629.5" fill="none" stroke="#f00" stroke-width="1"/></g><path d="M1008.5,642 L1016.5,650.5 L1012.5,650.5" fill="none" stroke="#f4a0a0" stroke-width="1" shape-rendering="geometricPrecision"/><path d="M1008.5,642 L1000.5,650.5 L1004.5,650.5" fill="none" stroke="#f4a0a0" stroke-width="1" shape-rendering="geometricPrecision"/><path d="M1001,650.5H1005V663.5H1012.5V650.5H1016.5" fill="none" stroke="#f00" stroke-width="1.6"/><path d="M987,109H996L991.5,114.5Z" fill="#778899"/><path d="M8.5,109.5H1239.5V683.5H8.5Z" fill="none" stroke="#000" stroke-width="1"/><path d="M1240,119.5H1243 M1240,152.5H1243 M1240,185.5H1243 M1240,218.5H1243 M1240,251.5H1243 M1240,284.5H1243 M1240,317.5H1243 M1240,350.5H1243 M1240,383.5H1243 M1240,416.5H1243 M1240,449.5H1243 M1240,482.5H1243 M1240,515.5H1243 M1240,548.5H1243 M1240,581.5H1243 M1240,647.5H1243 M1240,680.5H1243 M9.5,684V688 M73.5,684V688 M137.5,684V688 M201.5,684V688 M265.5,684V688 M329.5,684V688 M393.5,684V688 M457.5,684V688 M521.5,684V688 M585.5,684V688 M649.5,684V688 M713.5,684V688 M777.5,684V688 M841.5,684V688 M905.5,684V688 M969.5,684V688" stroke="#000" stroke-width="1" fill="none"/><g font-family='"Liberation Sans", sans-serif' font-size="9.6" letter-spacing="-0.34" fill="#000"><text x="1244.5" y="122" transform="matrix(1 0 0 1.12 0 -14.64)">0.99690</text><text x="1244.5" y="155" transform="matrix(1 0 0 1.12 0 -18.60)">0.98990</text><text x="1244.5" y="188" transform="matrix(1 0 0 1.12 0 -22.56)">0.98270</text><text x="1244.5" y="221" transform="matrix(1 0 0 1.12 0 -26.52)">0.97570</text><text x="1244.5" y="254" transform="matrix(1 0 0 1.12 0 -30.48)">0.96870</text><text x="1244.5" y="287" transform="matrix(1 0 0 1.12 0 -34.44)">0.96170</text><text x="1244.5" y="320" transform="matrix(1 0 0 1.12 0 -38.40)">0.95450</text><text x="1244.5" y="353" transform="matrix(1 0 0 1.12 0 -42.36)">0.94750</text><text x="1244.5" y="386" transform="matrix(1 0 0 1.12 0 -46.32)">0.94050</text><text x="1244.5" y="419" transform="matrix(1 0 0 1.12 0 -50.28)">0.93350</text><text x="1244.5" y="452" transform="matrix(1 0 0 1.12 0 -54.24)">0.92630</text><text x="1244.5" y="485" transform="matrix(1 0 0 1.12 0 -58.20)">0.91930</text><text x="1244.5" y="518" transform="matrix(1 0 0 1.12 0 -62.16)">0.91230</text><text x="1244.5" y="551" transform="matrix(1 0 0 1.12 0 -66.12)">0.90530</text><text x="1244.5" y="584" transform="matrix(1 0 0 1.12 0 -70.08)">0.89810</text><text x="1244.5" y="650" transform="matrix(1 0 0 1.12 0 -78.00)">0.88410</text><text x="1244.5" y="683" transform="matrix(1 0 0 1.12 0 -81.96)">0.87710</text><text x="7.5" y="696" transform="matrix(1 0 0 1.12 0 -83.52)">24 Jun 2013</text><text x="71.5" y="696" transform="matrix(1 0 0 1.12 0 -83.52)">4 Jul 2013</text><text x="135.5" y="696" transform="matrix(1 0 0 1.12 0 -83.52)">16 Jul 2013</text><text x="199.5" y="696" transform="matrix(1 0 0 1.12 0 -83.52)">26 Jul 2013</text><text x="263.5" y="696" transform="matrix(1 0 0 1.12 0 -83.52)">7 Aug 2013</text><text x="327.5" y="696" transform="matrix(1 0 0 1.12 0 -83.52)">19 Aug 2013</text><text x="391.5" y="696" transform="matrix(1 0 0 1.12 0 -83.52)">29 Aug 2013</text><text x="455.5" y="696" transform="matrix(1 0 0 1.12 0 -83.52)">10 Sep 2013</text><text x="519.5" y="696" transform="matrix(1 0 0 1.12 0 -83.52)">20 Sep 2013</text><text x="583.5" y="696" transform="matrix(1 0 0 1.12 0 -83.52)">2 Oct 2013</text><text x="647.5" y="696" transform="matrix(1 0 0 1.12 0 -83.52)">14 Oct 2013</text><text x="711.5" y="696" transform="matrix(1 0 0 1.12 0 -83.52)">24 Oct 2013</text><text x="775.5" y="696" transform="matrix(1 0 0 1.12 0 -83.52)">4 Nov 2013</text><text x="839.5" y="696" transform="matrix(1 0 0 1.12 0 -83.52)">14 Nov 2013</text><text x="903.5" y="696" transform="matrix(1 0 0 1.12 0 -83.52)">26 Nov 2013</text><text x="967.5" y="696" transform="matrix(1 0 0 1.12 0 -83.52)">6 Dec 2013</text></g><rect x="1242" y="606" width="39" height="11" fill="#000"/><text x="1244.5" y="615" font-family='"Liberation Sans", sans-serif' font-size="9.6" letter-spacing="-0.34" fill="#fff" transform="matrix(1 0 0 1.12 0 -73.80)">0.89157</text><rect x="1242" y="618" width="39" height="11" fill="#0000cc"/><text x="1244.5" y="627" font-family='"Liberation Sans", sans-serif' font-size="9.6" letter-spacing="-0.34" fill="#fff" transform="matrix(1 0 0 1.12 0 -75.24)">0.88904</text><path d="M1240,614.5h2" stroke="#000"/><path d="M12,116H19.5L15.75,120Z" fill="#000"/><rect x="24" y="112" width="212" height="10" fill="#fff"/><g font-family='"Liberation Sans", sans-serif' font-size="9.6" letter-spacing="-0.34" fill="#000"><text x="23.5" y="121" textLength="64" lengthAdjust="spacing" transform="matrix(1 0 0 1.12 0 -14.52)">USDCHF,Daily</text><text x="94.5" y="121" transform="matrix(1 0 0 1.12 0 -14.52)">0.89153</text><text x="130.5" y="121" transform="matrix(1 0 0 1.12 0 -14.52)">0.89341</text><text x="166.8" y="121" transform="matrix(1 0 0 1.12 0 -14.52)">0.89093</text><text x="202.3" y="121" transform="matrix(1 0 0 1.12 0 -14.52)">0.89157</text></g><rect x="9" y="551" width="85" height="10" fill="#fff"/><rect x="9" y="573" width="85" height="10" fill="#fff"/><text x="15" y="559" font-family='"Liberation Sans", sans-serif' font-size="9.6" letter-spacing="-0.34" fill="#000" textLength="76" lengthAdjust="spacing" transform="matrix(1 0 0 1.12 0 -67.08)">#845161 tpıy 0.20</text><text x="15" y="581" font-family='"Liberation Sans", sans-serif' font-size="9.6" letter-spacing="-0.34" fill="#000" textLength="76" lengthAdjust="spacing" transform="matrix(1 0 0 1.12 0 -69.72)">#845161 buy 0.20</text></svg>
<div id="tabs" class="a">
<div class="a" style="left:0;top:2px;width:1280px;height:1px;background:#000"></div>
<div class="a" style="left:1px;top:3px;width:1px;height:16px;background:#7b7b70"></div>
<div class="a" style="left:84px;top:2px;width:88px;height:19px;background:#fff;border:1px solid #000;border-top:none"></div>
<span style="left:14px">EURUSD,H1</span>
<span style="left:92px;top:5px;color:#000;font-size:10.5px">USDCHF,Daily</span>
<span style="left:183px">GBPUSD,H1</span>
<i style="left:252px"></i>
<span style="left:263px">USDJPY,H4</span>
<i style="left:328px"></i>
<span style="left:339px">EURJPY,H1</span>
<i style="left:405px"></i>
<span style="left:414px">AUDNZD,H1</span>
<i style="left:484px"></i>
<span style="left:495px">USDCAD,H4</span>
<i style="left:564px"></i>
<span style="left:574px">NZDUSD,Daily</span>
<i style="left:653px"></i>
<span style="left:662px">AUDUSD,H4</span>
<i style="left:732px"></i>
<span style="left:742px">XAUUSD,H4</span>
<i style="left:812px"></i>
<span style="left:823px">GBPCHF,Daily</span>
<i style="left:900px"></i>
<span style="left:909px">GBPJPY,Daily</span>
<i style="left:984px"></i>
<span style="left:994px">EURCHF,H1</span>
<i style="left:1064px"></i>
<span style="left:1075px">EURGBP,H1</span>
<i style="left:1143px"></i>
<svg class="a" style="left:1246px;top:6px" width="30" height="10"><path d="M5,5l4,-3.5v7z M22,1.5v7l4,-3.5z" fill="#b8b8b8"/></svg>
</div>
<div id="status" class="a">
<span style="left:2px">Для справки, нажмите F1</span>
<i style="left:559px"></i><span style="left:564px">Default</span>
<i style="left:668px"></i><i style="left:769px"></i><i style="left:842px"></i><i style="left:912px"></i><i style="left:981px"></i><i style="left:1052px"></i><i style="left:1120px"></i>
<svg class="a" style="left:1123px;top:5px" width="26" height="13" shape-rendering="crispEdges"><path d="M1.5,0V13 M4.5,0V13 M7.5,0V13 M10.5,0V13 M13.5,0V13 M16.5,0V13 M19.5,0V13 M22.5,0V13" stroke="#5a8a00" stroke-width="2"/><path d="M1.5,10V13 M4.5,9V13 M7.5,8V13 M10.5,7V13 M13.5,6V13 M16.5,5V13 M19.5,4V13 M22.5,3V13" stroke="#b01800" stroke-width="2"/></svg>
<span style="left:1171px">4423/3 kb</span>
<svg class="a" style="left:1264px;top:6px" width="16" height="16"><path d="M15,3L3,15 M15,7L7,15 M15,11L11,15" stroke="#a0a0a0" stroke-width="1.2"/><path d="M15,4L4,15 M15,8L8,15 M15,12L12,15" stroke="#fff" stroke-width="0.8"/></svg>
</div>
<div id="task" class="a"></div>
<div id="taskst" class="a"></div>
</body></html>
